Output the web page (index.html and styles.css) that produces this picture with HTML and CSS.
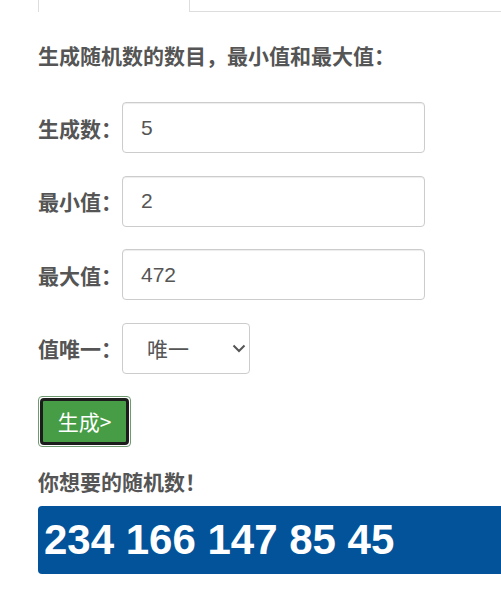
FILE: index.html
```html
<!DOCTYPE html>
<html lang="zh-CN">
<head>
<meta charset="utf-8">
<title>随机数生成</title>
<link rel="stylesheet" href="styles.css">
</head>
<body>
<div class="page">
  <ul class="tabs">
    <li class="tab tab-active"></li>
    <li class="tab-rest"></li>
  </ul>
  <h4 class="title">生成随机数的数目，最小值和最大值：</h4>
  <form class="form">
    <div class="row">
      <label class="label">生成数：</label>
      <input class="field" type="text" value="5">
    </div>
    <div class="row">
      <label class="label">最小值：</label>
      <input class="field" type="text" value="2">
    </div>
    <div class="row">
      <label class="label">最大值：</label>
      <input class="field" type="text" value="472">
    </div>
    <div class="row">
      <label class="label">值唯一：</label>
      <span class="select-wrap">
        <select class="select"><option>唯一</option><option>不唯一</option></select>
        <svg class="chevron" width="14" height="9" viewBox="0 0 14 9"><polyline points="1.5,1.5 7,7 12.5,1.5" fill="none" stroke="#555" stroke-width="2"/></svg>
      </span>
    </div>
    <button class="btn" type="button"><span class="btn-inner">生成&gt;</span></button>
  </form>
  <h4 class="title result-title">你想要的随机数！</h4>
  <div class="result">234 166 147 85 45</div>
</div>
</body>
</html>
```

FILE: styles.css
```css
html, body {
  margin: 0;
  padding: 0;
  background: #fff;
  overflow: hidden;
}

.page {
  padding-left: 38px;
}

.tabs {
  display: flex;
  margin: 0;
  padding: 0;
  list-style: none;
  height: 12px;
}

.tab {
  width: 150px;
  height: 12px;
  border-left: 1px solid #ddd;
  border-right: 1px solid #ddd;
  background: #fff;
}

.tab-rest {
  flex: 1;
  height: 12px;
  box-sizing: border-box;
  border-bottom: 1px solid #ddd;
}

.title {
  margin: 28px 0 32px;
  font-family: "Noto Sans CJK SC", sans-serif;
  font-size: 21px;
  font-weight: 700;
  line-height: 30px;
  color: #555;
}

.form {
  margin: 0;
}

.row {
  display: flex;
  align-items: center;
  margin-bottom: 22.5px;
}

.label {
  width: 84px;
  font-family: "Noto Sans CJK SC", sans-serif;
  font-size: 21px;
  font-weight: 700;
  line-height: 30px;
  color: #555;
}

.field {
  width: 303px;
  height: 51px;
  box-sizing: border-box;
  margin: 0;
  padding: 0 18px;
  border: 1px solid #ccc;
  border-radius: 4px;
  box-shadow: inset 0 1px 1px rgba(0, 0, 0, 0.075);
  font-family: "Liberation Sans", Arial, sans-serif;
  font-size: 21px;
  color: #555;
  background: #fff;
  outline: none;
}

.select-wrap {
  position: relative;
  display: block;
  width: 128px;
  height: 51px;
}

.select {
  -webkit-appearance: none;
  appearance: none;
  width: 128px;
  height: 51px;
  box-sizing: border-box;
  margin: 0;
  padding: 0 0 0 24px;
  border: 1px solid #ccc;
  border-radius: 4px;
  background: #fff;
  font-family: "Noto Sans CJK SC", sans-serif;
  font-size: 21px;
  color: #555;
  outline: none;
}

.chevron {
  position: absolute;
  left: 110px;
  top: 21px;
  pointer-events: none;
}

.btn {
  display: block;
  width: 93px;
  height: 51px;
  box-sizing: border-box;
  margin: 0;
  padding: 1px;
  border: 1px solid #6f9a6f;
  border-radius: 4px;
  background: #fff;
  cursor: pointer;
}

.btn-inner {
  display: flex;
  align-items: center;
  justify-content: center;
  height: 100%;
  box-sizing: border-box;
  border: 3px solid #1c1c1c;
  border-radius: 4px;
  background: #469d45;
  color: #fff;
  font-family: "Noto Sans CJK SC", sans-serif;
  font-size: 21px;
  line-height: 1;
}

.result-title {
  margin: 19px 0 10px;
}

.result {
  height: 68px;
  margin-right: -20px;
  padding-left: 6px;
  border-radius: 4px;
  background: #02539a;
  color: #fff;
  font-family: "Liberation Sans", Arial, sans-serif;
  font-size: 42px;
  font-weight: 700;
  line-height: 68px;
  white-space: nowrap;
}
```
